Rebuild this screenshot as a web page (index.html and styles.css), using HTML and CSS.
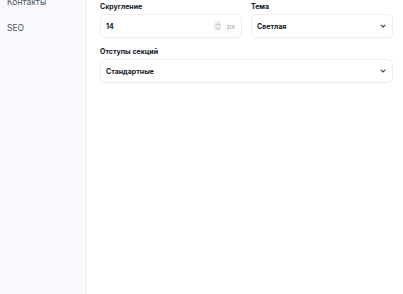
FILE: index.html
```html
<!DOCTYPE html>
<html lang="ru">
<head>
<meta charset="utf-8">
<link rel="stylesheet" href="styles.css">
</head>
<body>
<div class="layout">
  <aside class="sidebar">
    <ul class="nav">
      <li class="nav-item">Контакты</li>
      <li class="nav-item">SEO</li>
    </ul>
  </aside>
  <main class="main">
    <div class="grid">
      <div class="field">
        <label class="label">Скругление</label>
        <div class="control">
          <span class="value">14</span>
          <span class="spin">
            <svg width="6" height="9" viewBox="0 0 6 9"><path d="M1 3.5 L3 1.5 L5 3.5 M1 5.5 L3 7.5 L5 5.5" fill="none" stroke="#9ca3af" stroke-width="0.9"/></svg>
          </span>
          <span class="unit">px</span>
        </div>
      </div>
      <div class="field">
        <label class="label">Тема</label>
        <div class="control">
          <span class="value">Светлая</span>
          <svg class="chev" width="6" height="4" viewBox="0 0 6 4"><path d="M0.8 0.8 L3 3 L5.2 0.8" fill="none" stroke="#374151" stroke-width="1.1"/></svg>
        </div>
      </div>
      <div class="field wide">
        <label class="label">Отступы секций</label>
        <div class="control">
          <span class="value">Стандартные</span>
          <svg class="chev" width="6" height="4" viewBox="0 0 6 4"><path d="M0.8 0.8 L3 3 L5.2 0.8" fill="none" stroke="#374151" stroke-width="1.1"/></svg>
        </div>
      </div>
    </div>
  </main>
</div>
</body>
</html>
```
FILE: styles.css
```css
* { box-sizing: border-box; }
html, body { margin: 0; padding: 0; background: #fff; }
body {
  font-family: "Inter", "Noto Sans", sans-serif;
  color: #111827;
  width: 403px;
  height: 294px;
  overflow: hidden;
}
.layout {
  display: flex;
  height: 294px;
}
.sidebar {
  width: 87px;
  flex: none;
  background: #f8f9fc;
  border-right: 1px solid #eceef3;
}
.nav {
  list-style: none;
  margin: -4px 0 0 0;
  padding: 0 0 0 7px;
  display: flex;
  flex-direction: column;
  gap: 13px;
}
.nav-item {
  font-size: 8.5px;
  line-height: 13px;
  color: #4b5563;
}
.main {
  flex: 1;
  padding: 3px 10px 0 13px;
}
.grid {
  display: grid;
  grid-template-columns: 1fr 1fr;
  column-gap: 9px;
  row-gap: 10px;
}
.wide { grid-column: 1 / 3; }
.field {
  display: flex;
  flex-direction: column;
  gap: 3px;
}
.label {
  font-size: 7px;
  font-weight: 700;
  line-height: 8px;
  color: #111827;
}
.control {
  height: 24px;
  border: 1px solid #eceef2;
  border-radius: 5px;
  display: flex;
  align-items: center;
  padding: 0 6px 0 5px;
  font-size: 7px;
  font-weight: 700;
  color: #111827;
  box-shadow: 0 1px 1px rgba(0,0,0,0.02);
}
.value { flex: 1; }
.spin {
  display: flex;
  align-items: center;
  justify-content: center;
  width: 7px;
  height: 10px;
  background: #eef0f3;
  border-radius: 1px;
  margin-right: 6px;
}
.unit {
  font-size: 7px;
  font-weight: 400;
  color: #9ca3af;
}
.chev { flex: none; }
```
